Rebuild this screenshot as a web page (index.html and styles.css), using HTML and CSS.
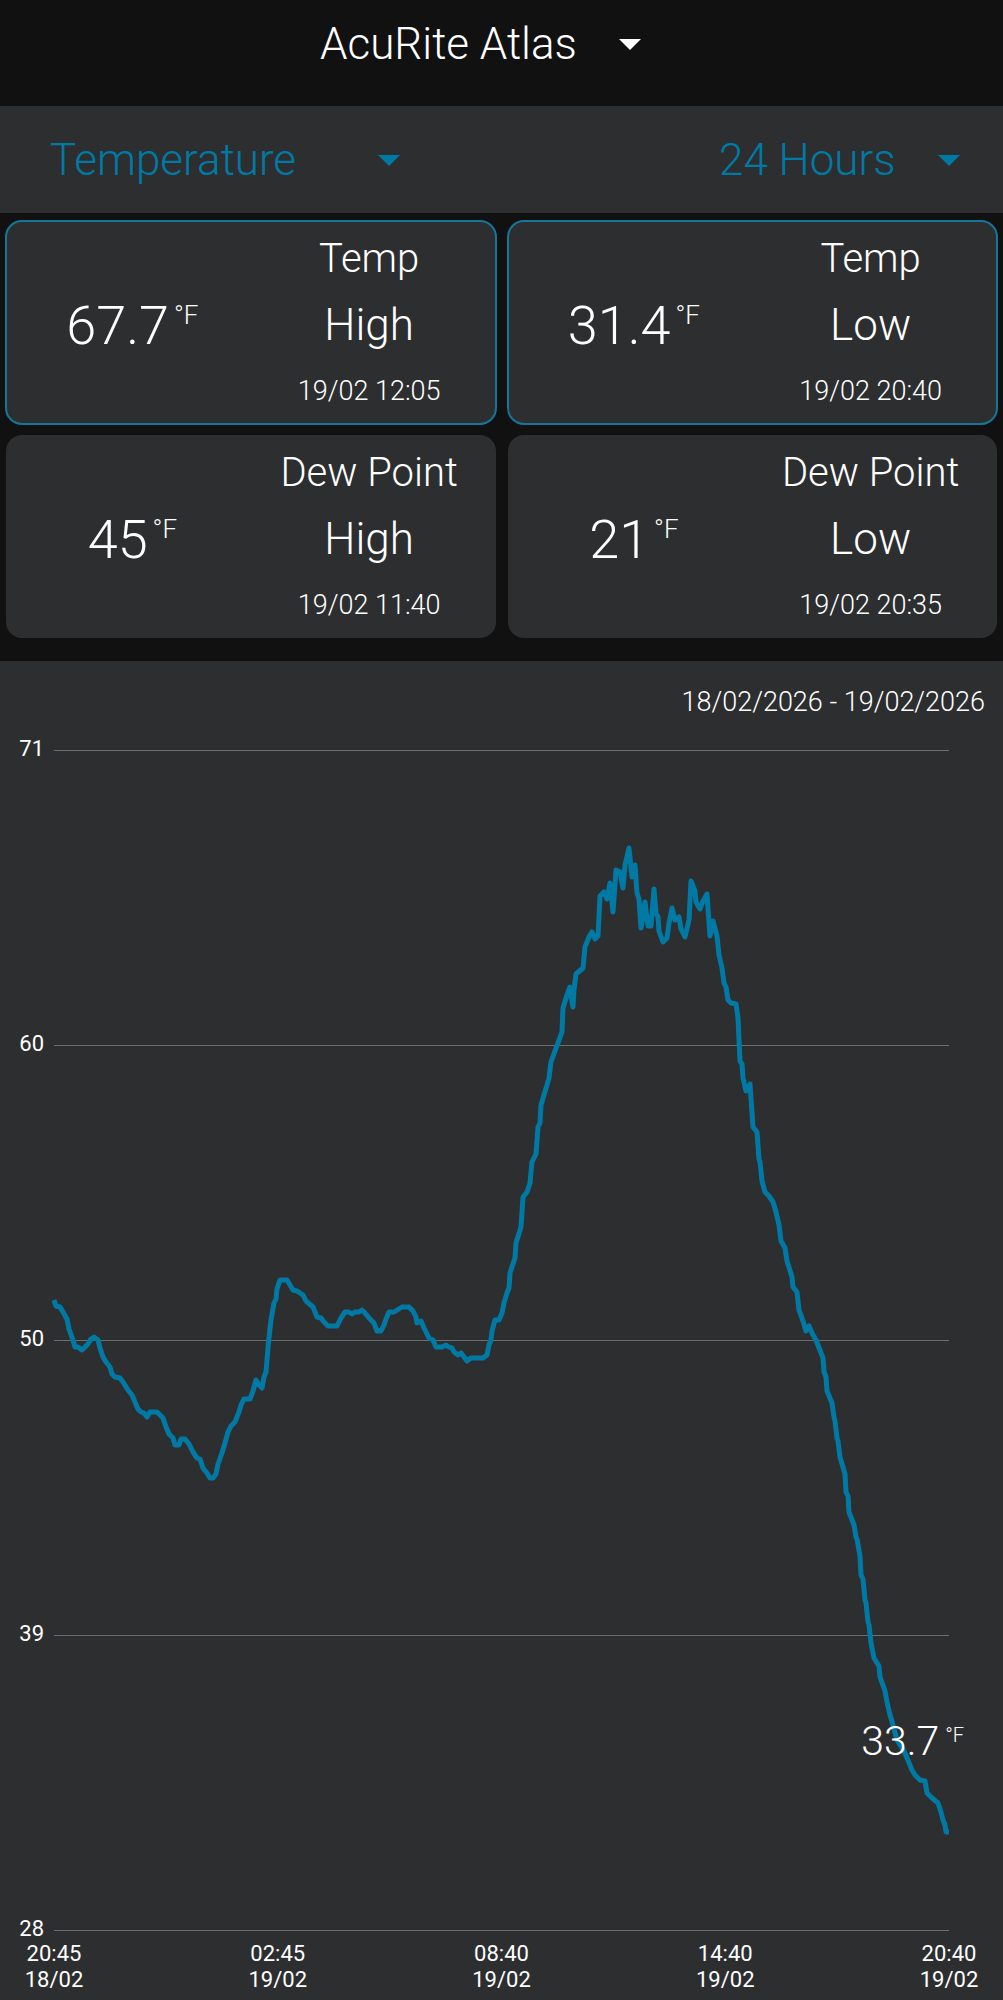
FILE: index.html
```html
<!DOCTYPE html>
<html lang="en">
<head>
<meta charset="UTF-8">
<meta name="viewport" content="width=device-width, initial-scale=1.0">
<title>AcuRite Atlas</title>
<link rel="stylesheet" href="styles.css">
</head>
<body>

<header class="header">
  <div class="dropdown">
    <select class="dropdown-select" aria-label="Device">
      <option>AcuRite Atlas</option>
    </select>
    <svg class="caret" viewBox="0 0 22 11" aria-hidden="true"><path d="M0 0h22L11 11z"/></svg>
  </div>
</header>

<div class="filters">
  <div class="dropdown dropdown-sensor">
    <select class="dropdown-select" aria-label="Sensor">
      <option>Temperature</option>
    </select>
    <svg class="caret" viewBox="0 0 22 11" aria-hidden="true"><path d="M0 0h22L11 11z"/></svg>
  </div>
  <div class="dropdown">
    <select class="dropdown-select" aria-label="Period">
      <option>24 Hours</option>
    </select>
    <svg class="caret" viewBox="0 0 22 11" aria-hidden="true"><path d="M0 0h22L11 11z"/></svg>
  </div>
</div>

<main>
  <section class="cards">
    <div class="card active">
      <div class="value">67.7<span class="unit">°F</span></div>
      <div class="info">
        <span class="name">Temp</span>
        <span class="kind">High</span>
        <span class="date">19/02 12:05</span>
      </div>
    </div>
    <div class="card active">
      <div class="value">31.4<span class="unit">°F</span></div>
      <div class="info">
        <span class="name">Temp</span>
        <span class="kind">Low</span>
        <span class="date">19/02 20:40</span>
      </div>
    </div>
    <div class="card">
      <div class="value">45<span class="unit">°F</span></div>
      <div class="info">
        <span class="name">Dew Point</span>
        <span class="kind">High</span>
        <span class="date">19/02 11:40</span>
      </div>
    </div>
    <div class="card">
      <div class="value">21<span class="unit">°F</span></div>
      <div class="info">
        <span class="name">Dew Point</span>
        <span class="kind">Low</span>
        <span class="date">19/02 20:35</span>
      </div>
    </div>
  </section>

  <section class="chart">
    <p class="range">18/02/2026 - 19/02/2026</p>
    <div class="chart-body">
      <div class="y-axis">
        <span>71</span>
        <span>60</span>
        <span>50</span>
        <span>39</span>
        <span>28</span>
      </div>
      <div class="plot">
        <svg class="plot-svg" viewBox="54 750 895 1180" role="img" aria-label="Temperature over 24 hours">
          <g class="grid">
            <path d="M54 750.5H949M54 1045.5H949M54 1340.5H949M54 1635.5H949M54 1930.5H949"/>
          </g>
          <polyline class="line" points="
            54,1300 56,1306 60,1307 63,1312 67,1319 69,1329 73,1340 75,1347 78,1347 82,1350 88,1344 91,1339
            94,1337 98,1340 100,1348 103,1357 106,1362 110,1367 112,1374 115,1377 120,1378 123,1382 128,1390
            132,1395 135,1402 138,1409 141,1412 144,1413 147,1417 150,1412 157,1412 163,1418 166,1427 169,1434
            173,1438 175,1445 179,1445 181,1439 185,1439 189,1444 193,1452 197,1458 200,1459 203,1468 207,1473
            210,1478 213,1478 216,1474 218,1464 222,1453 225,1443 228,1432 231,1426 235,1422 239,1412 241,1405
            244,1399 250,1399 253,1391 256,1380 259,1385 262,1388 264,1377 266,1372 268,1348 269,1338 271,1320
            272,1314 274,1303 276,1299 277,1289 280,1280 287,1280 293,1290 297,1291 303,1295 306,1301 313,1307
            317,1317 321,1318 324,1322 328,1326 337,1326 341,1318 345,1312 349,1312 352,1314 355,1312 359,1312
            362,1310 365,1313 369,1318 374,1323 377,1331 381,1331 384,1325 386,1319 389,1312 394,1312 402,1307
            409,1307 413,1311 416,1317 417,1323 421,1321 424,1328 429,1338 433,1340 436,1347 442,1347 446,1345
            449,1347 452,1348 454,1352 458,1355 461,1353 464,1357 467,1361 471,1358 483,1358 487,1355 489,1345
            491,1340 492,1331 495,1320 499,1320 502,1313 504,1303 507,1293 509,1288 510,1273 515,1258 516,1243
            521,1227 523,1197 527,1192 530,1183 532,1162 536,1154 538,1127 540,1123 541,1105 547,1085 549,1078
            551,1062 555,1051 558,1043 562,1032 563,1008 567,995 570,987 571,995 573,1007 574,990 576,974
            583,968 585,947 589,937 592,932 595,939 598,936 600,896 604,892 607,899 610,883 613,912 616,870
            620,872 623,888 625,865 629,848 632,877 635,865 637,893 639,899 641,928 645,902 648,926 651,926
            654,889 656,913 658,917 659,931 663,942 667,938 669,923 672,908 675,920 679,917 681,929 685,937
            689,920 691,881 695,891 696,902 700,909 703,901 707,894 710,936 713,921 717,936 719,955 722,968
            724,983 726,987 728,1000 731,1003 736,1004 738,1018 740,1061 742,1064 743,1078 746,1091 750,1084
            753,1127 757,1132 759,1159 760,1162 762,1181 765,1192 769,1196 773,1202 776,1212 779,1225 781,1241
            785,1248 787,1261 792,1277 793,1287 797,1292 799,1310 803,1321 806,1331 809,1326 812,1333 816,1340
            823,1358 824,1372 826,1377 827,1391 832,1403 834,1417 835,1421 837,1438 838,1441 840,1457 845,1474
            846,1492 848,1496 849,1512 854,1525 856,1537 857,1539 860,1556 861,1575 863,1579 865,1600 866,1603
            868,1622 869,1625 871,1643 874,1658 879,1666 880,1677 885,1691 887,1702 890,1715 893,1725 897,1740
            904,1751 907,1758 912,1770 915,1775 920,1780 925,1781 927,1793 932,1798 938,1803 941,1812 943,1820
            945,1825 946,1832 949,1832"/>
        </svg>
        <div class="current">33.7<span class="current-unit">°F</span></div>
      </div>
    </div>
    <div class="x-axis">
      <span>20:45<br>18/02</span>
      <span>02:45<br>19/02</span>
      <span>08:40<br>19/02</span>
      <span>14:40<br>19/02</span>
      <span>20:40<br>19/02</span>
    </div>
  </section>
</main>

</body>
</html>
```
FILE: styles.css
```css
* {
  box-sizing: border-box;
}

body {
  margin: 0;
  background: #111111;
  color: #fff;
  font-family: Roboto, "Liberation Sans", sans-serif;
  font-weight: 300;
}

/* Dropdowns */
.header {
  display: flex;
  justify-content: center;
  padding: 16px 42px 34px 0;
}

.filters {
  display: flex;
  justify-content: space-between;
  padding: 26px 43px 25px 50px;
  background: #2d2e30;
  color: #007aa5;
}

.dropdown {
  position: relative;
}

.dropdown-sensor {
  width: 350px;
}

.dropdown-select {
  display: block;
  width: 100%;
  height: 56px;
  padding: 0 64px 0 0;
  border: none;
  background: transparent;
  color: inherit;
  font: inherit;
  font-size: 44px;
  appearance: none;
  cursor: pointer;
}

.dropdown-select option {
  background: #2d2e30;
}

.caret {
  position: absolute;
  top: 23px;
  right: 0;
  width: 22px;
  height: 11px;
  fill: currentColor;
  pointer-events: none;
}

/* High / low cards */
.cards {
  display: grid;
  grid-template-columns: 1fr 1fr;
  gap: 11px 12px;
  padding: 8px 6px 23px;
}

.card {
  display: grid;
  grid-template-columns: 1fr 1fr;
  align-items: center;
  padding: 5px 8px 0;
  background: #2d2e30;
  border-radius: 16px;
}

.card.active {
  outline: 2px solid #15769a;
  outline-offset: -1px;
}

.value {
  display: flex;
  justify-content: center;
  align-items: flex-start;
  gap: 5px;
  font-size: 54px;
  line-height: 55px;
}

.unit {
  padding-top: 4px;
  font-size: 26px;
  line-height: 26px;
}

.info {
  display: flex;
  flex-direction: column;
  text-align: center;
  line-height: 66px;
}

.name {
  font-size: 40px;
}

.kind {
  font-size: 44px;
}

.date {
  font-size: 27px;
}

/* Chart */
.chart {
  padding: 25px 18px 8px;
  background: #2d2e30;
}

.range {
  margin: 0 0 19px;
  font-size: 27px;
  line-height: 32px;
  text-align: right;
}

.chart-body {
  display: flex;
  gap: 10px;
  padding-right: 36px;
}

.y-axis {
  display: flex;
  flex-direction: column;
  justify-content: space-between;
  width: 26px;
  font-size: 22px;
  font-weight: 400;
  line-height: 24px;
  text-align: right;
}

.plot {
  position: relative;
  flex: 1;
  margin: 13px 0 11px;
}

.plot-svg {
  display: block;
  width: 100%;
  overflow: visible;
}

.grid {
  fill: none;
  stroke: #6c6d6f;
  stroke-width: 1;
}

.line {
  fill: none;
  stroke: #007aa5;
  stroke-width: 5;
  stroke-linejoin: round;
}

/* Latest reading, drawn over the line */
.current {
  position: absolute;
  top: 82%;
  right: -15px;
  display: flex;
  gap: 6px;
  font-size: 41px;
  line-height: 46px;
}

.current-unit {
  padding-top: 5px;
  font-size: 20px;
  line-height: 24px;
}

.x-axis {
  display: flex;
  justify-content: space-between;
  padding: 0 6px;
  font-size: 22px;
  font-weight: 400;
  line-height: 26px;
  text-align: center;
}

.x-axis span {
  width: 60px;
}
```
